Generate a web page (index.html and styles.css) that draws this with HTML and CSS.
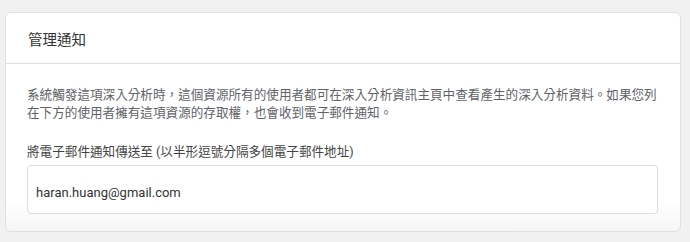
FILE: index.html
```html
<!DOCTYPE html>
<html>
  <head>
    <meta http-equiv="Content-Type" content="text/html;charset=UTF-8" />
    <meta name="viewport" content="width=device-width, initial-scale=1.0" />
    <title>管理通知</title>
    <link rel="stylesheet" href="styles.css">
  </head>
  <body>
    <div class="card">
      <div class="card_header">
        <h2 class="card_title">管理通知</h2>
      </div>
      <div class="card_body">
        <p class="description">
          系統觸發這項深入分析時，這個資源所有的使用者都可在深入分析資訊主頁中查看產生的深入分析資料。如果您列在下方的使用者擁有這項資源的存取權，也會收到電子郵件通知。
        </p>
        <label class="field_label" for="emails">將電子郵件通知傳送至 (以半形逗號分隔多個電子郵件地址)</label>
        <div class="field">
          <input id="emails" class="field_input" type="text" value="haran.huang@gmail.com" />
        </div>
      </div>
    </div>
  </body>
</html>
```

FILE: styles.css
```css
html {
  font-size: 13px;
  font-family: Roboto, "Noto Sans CJK TC", sans-serif;
}
body {
  margin: 0;
  padding: 12px 9px 9px 5px;
  background-color: #f1f1f1;
  color: #5f6368;
}
.card {
  background: linear-gradient(to bottom, #fff 0, #fff 85%, #f6f6f6 100%);
  border: 1px solid #e0e0e0;
  border-radius: 6px;
  height: 220px;
  box-sizing: border-box;
}
.card_header {
  height: 51px;
  display: flex;
  align-items: center;
  padding: 0 22px;
  border-bottom: 1px solid #e0e0e0;
  box-sizing: border-box;
}
.card_title {
  margin: 0;
  font-size: 14.5px;
  font-weight: normal;
  color: #333;
}
.card_body {
  padding: 22px 22px 0 21px;
}
.description {
  margin: 0;
  font-size: 12.6px;
  line-height: 18px;
}
.field_label {
  display: block;
  margin-top: 21px;
  font-size: 12.6px;
  line-height: 18px;
  color: #444;
}
.field {
  margin-top: 4px;
  height: 49px;
  border: 1px solid #dcdcdc;
  border-radius: 4px;
  box-sizing: border-box;
  background: #fff;
  display: flex;
  align-items: flex-end;
  padding: 0 8px 13px;
}
.field_input {
  border: 0;
  outline: 0;
  padding: 0;
  width: 100%;
  font: inherit;
  font-size: 13px;
  color: #333;
  background: transparent;
}
```
